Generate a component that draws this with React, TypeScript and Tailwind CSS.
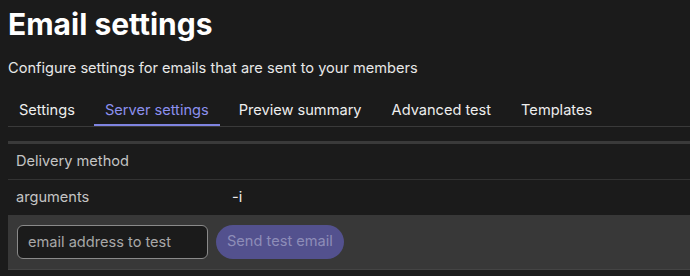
import React from "react";

const tabs = ["Settings", "Server settings", "Preview summary", "Advanced test", "Templates"];

function App() {
  const active = "Server settings";

  return (
    <div className="min-h-screen bg-[#1b1b1b] pl-2 font-['Inter',sans-serif] text-white">
      <h1 className="pt-[6px] text-[30px] font-bold leading-[36px]">Email settings</h1>
      <p className="mt-[16px] text-[14.6px] leading-[20px] text-[#e8e8e8]">
        Configure settings for emails that are sent to your members
      </p>

      <nav className="mt-[16px] flex gap-2 border-b border-[#3a3a3a]">
        {tabs.map((t) => (
          <button
            key={t}
            className={
              t === active
                ? "h-[32px] border-b-2 border-[#7f84e0] px-[11px] pt-[3px] text-[14.6px] text-[#8c90ee]"
                : "h-[32px] border-b-2 border-transparent px-[11px] pt-[3px] text-[14.6px] text-[#eeeeee]"
            }
          >
            {t}
          </button>
        ))}
      </nav>

      <section className="mt-[14px] border-t-[3px] border-[#3a3a3a]">
        <div className="flex h-[36px] items-center border-b border-[#333333] px-2 text-[14.6px] text-[#c4c4c4]">
          Delivery method
        </div>
        <div className="flex h-[35px] items-center px-2 text-[14.6px]">
          <span className="w-[216px] text-[#c4c4c4]">arguments</span>
          <span className="text-[#eeeeee]">-i</span>
        </div>
        <div className="flex items-center gap-2 border-b border-[#444444] bg-[#383838] py-[10px] pl-[9px]">
          <input
            placeholder="email address to test"
            className="h-[34px] w-[191px] rounded-md border border-[#8a8a8a] bg-[#1b1b1b] px-[10px] text-[14.6px] text-white outline-none placeholder:text-[#a8a8a8]"
          />
          <button className="h-[34px] rounded-full bg-[#53518e] px-[11px] text-[14.6px] text-[#8e8db8]">
            Send test email
          </button>
        </div>
      </section>
    </div>
  );
}

export default App;
